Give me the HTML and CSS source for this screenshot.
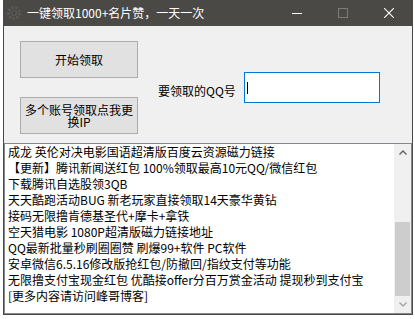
FILE: index.html
```html
<!DOCTYPE html>
<html lang="zh-CN">
<head>
  <meta charset="UTF-8">
  <title>一键领取1000+名片赞，一天一次</title>
  <link rel="stylesheet" href="styles.css">
</head>
<body>
  <div class="window">
    <div class="titlebar">
      <svg class="app-icon" width="16" height="16" viewBox="0 0 16 16">
        <circle cx="8" cy="8" r="5.5" fill="none" stroke="#5b5956" stroke-width="3" stroke-dasharray="2.2 1.6"/>
        <circle cx="8" cy="8" r="2.5" fill="none" stroke="#5b5956" stroke-width="1.2"/>
      </svg>
      <span class="title">一键领取1000+名片赞，一天一次</span>
      <div class="caption-btns">
        <span class="cap">
          <svg width="10" height="10" viewBox="0 0 10 10"><path d="M0 5.5h10" stroke="#fff" stroke-width="1"/></svg>
        </span>
        <span class="cap">
          <svg width="10" height="10" viewBox="0 0 10 10"><rect x="0.5" y="0.5" width="9" height="9" fill="none" stroke="#7d7b78" stroke-width="1"/></svg>
        </span>
        <span class="cap">
          <svg width="10" height="10" viewBox="0 0 10 10"><path d="M0 0L10 10M10 0L0 10" stroke="#fff" stroke-width="1.1"/></svg>
        </span>
      </div>
    </div>

    <div class="client">
      <div class="top">
        <div class="btn-col">
          <button class="btn">开始领取</button>
          <button class="btn">多个账号领取点我更换IP</button>
        </div>
        <label class="qq-label">要领取的QQ号</label>
        <div class="qq-input"><span class="caret"></span></div>
      </div>

      <div class="list">
        <div class="list-text">
          <div>成龙 英伦对决电影国语超清版百度云资源磁力链接</div>
          <div>【更新】腾讯新闻送红包 100%领取最高10元QQ/微信红包</div>
          <div>下载腾讯自选股领3QB</div>
          <div>天天酷跑活动BUG 新老玩家直接领取14天豪华黄钻</div>
          <div>接码无限撸肯德基圣代+摩卡+拿铁</div>
          <div>空天猎电影 1080P超清版磁力链接地址</div>
          <div>QQ最新批量秒刷圈圈赞 刷爆99+软件 PC软件</div>
          <div>安卓微信6.5.16修改版抢红包/防撤回/指纹支付等功能</div>
          <div>无限撸支付宝现金红包 优酷接offer分百万赏金活动 提现秒到支付宝</div>
          <div>[更多内容请访问峰哥博客]</div>
        </div>
        <div class="scrollbar">
          <span class="arrow">
            <svg width="8" height="5" viewBox="0 0 8 5"><path d="M0.5 4.5L4 1L7.5 4.5" fill="none" stroke="#606060" stroke-width="1.4"/></svg>
          </span>
          <span class="track"></span>
          <span class="thumb"></span>
          <span class="arrow">
            <svg width="8" height="5" viewBox="0 0 8 5"><path d="M0.5 0.5L4 4L7.5 0.5" fill="none" stroke="#a3a3a3" stroke-width="1.4"/></svg>
          </span>
        </div>
      </div>
    </div>
  </div>
</body>
</html>
```

FILE: styles.css
```css
* {
  margin: 0;
  padding: 0;
  box-sizing: border-box;
}

body {
  width: 415px;
  height: 319px;
  overflow: hidden;
  background: #fff;
  font-family: "Noto Sans CJK SC", sans-serif;
  font-size: 12px;
  color: #000;
}

.window {
  margin-left: 3px;
  width: 410px;
  border: 1px solid #4b4946;
  border-top: 0;
  background: #f0f0f0;
}

/* title bar */
.titlebar {
  height: 26px;
  background: #4b4946;
  display: flex;
  align-items: center;
  color: #fff;
}

.app-icon {
  margin-left: 2px;
  flex-shrink: 0;
}

.title {
  margin-left: 5px;
  line-height: 14px;
}

.caption-btns {
  margin-left: auto;
  display: flex;
}

.cap {
  width: 46px;
  height: 26px;
  display: flex;
  align-items: center;
  justify-content: center;
}

/* form area */
.top {
  height: 117px;
  display: flex;
  align-items: flex-start;
}

.btn-col {
  margin-left: 16px;
  padding-top: 15px;
  display: flex;
  flex-direction: column;
  gap: 19px;
}

.btn {
  width: 118px;
  height: 37px;
  padding: 0 3px;
  background: #e1e1e1;
  border: 1px solid #adadad;
  font: inherit;
  line-height: 12px;
  color: #000;
}

.qq-label {
  margin-left: 20px;
  margin-top: 59px;
  width: 86px;
  line-height: 12px;
}

.qq-input {
  margin-top: 46px;
  width: 136px;
  height: 31px;
  background: #fff;
  border: 1px solid #0078d7;
  display: flex;
  align-items: center;
  padding-left: 2px;
}

.caret {
  width: 1px;
  height: 12px;
  background: #000;
}

/* text list */
.list {
  height: 171px;
  border: 1px solid #828790;
  background: #fff;
  display: flex;
}

.list-text {
  flex: 1;
  padding-left: 3px;
  line-height: 16px;
  white-space: nowrap;
  overflow: hidden;
}

.scrollbar {
  width: 17px;
  background: #f0f0f0;
  display: flex;
  flex-direction: column;
}

.arrow {
  height: 17px;
  display: flex;
  align-items: center;
  justify-content: center;
}

.track {
  height: 61px;
}

.thumb {
  flex: 1;
  margin: 0 1px;
  background: #cdcdcd;
}
```
